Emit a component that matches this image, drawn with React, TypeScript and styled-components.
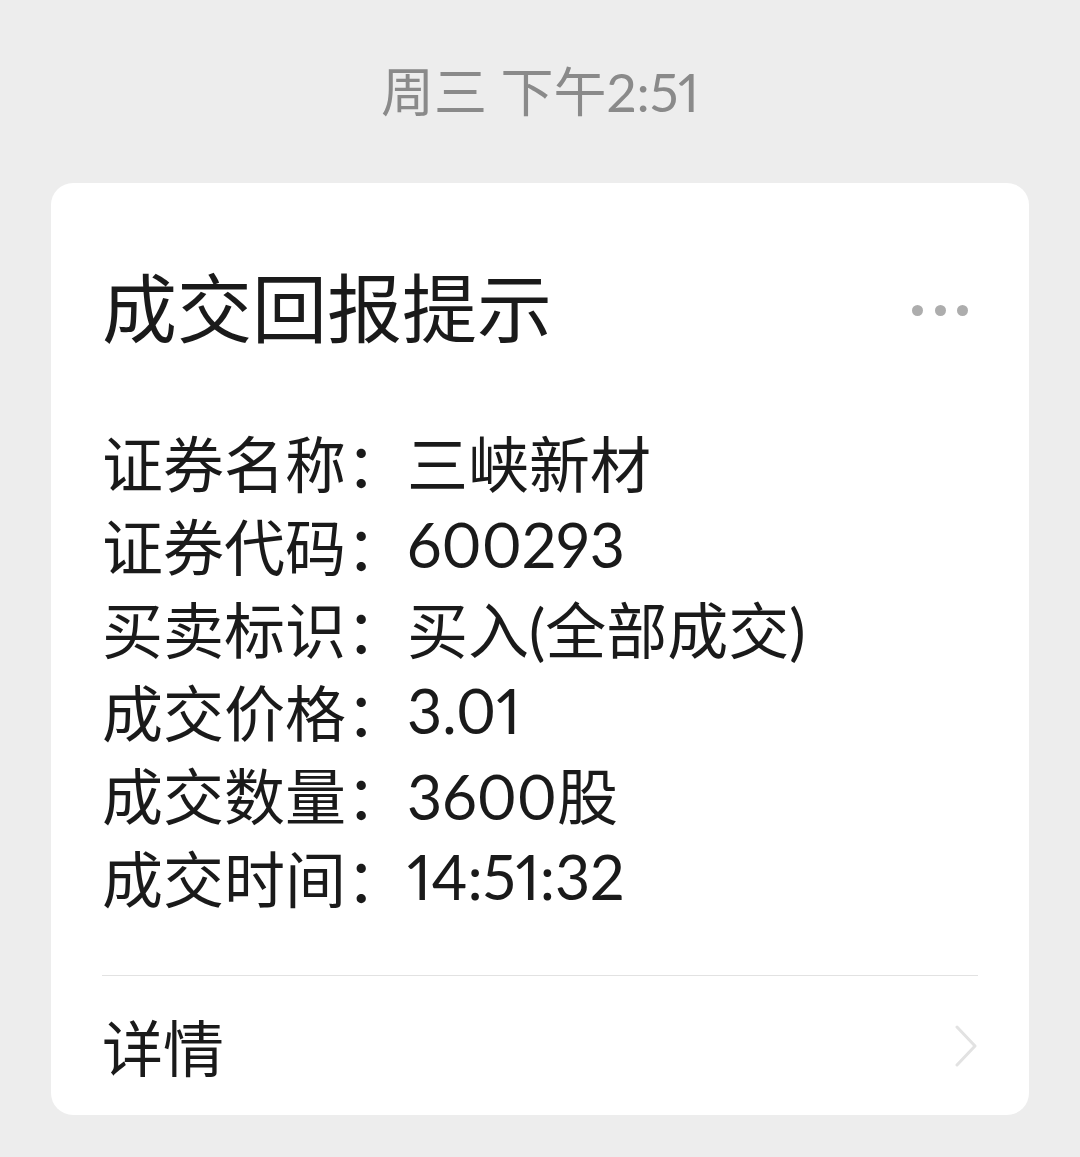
import React from "react";
import styled, { createGlobalStyle } from "styled-components";

const GlobalStyle = createGlobalStyle`
  html, body {
    margin: 0;
    padding: 0;
    background: #ededed;
  }
  body {
    font-family: Lato, "Noto Sans CJK SC", sans-serif;
    -webkit-font-smoothing: antialiased;
  }
`;

const Page = styled.div`
  width: 1080px;
  min-height: 1157px;
  background: #ededed;
  display: flex;
  flex-direction: column;
  align-items: center;
  box-sizing: border-box;
  padding-top: 61px;
`;

const Stamp = styled.div`
  height: 62px;
  line-height: 62px;
  font-size: 53px;
  color: #8a8a8a;
  white-space: pre;
  font-family: Lato, "Noto Sans CJK SC", sans-serif;
  font-variant-numeric: proportional-nums;
`;

const Card = styled.section`
  margin-top: 60px;
  width: 978px;
  background: #ffffff;
  border-radius: 22px;
  box-sizing: border-box;
  padding: 0 51px;
  display: flex;
  flex-direction: column;
`;

const Header = styled.div`
  display: flex;
  align-items: center;
  justify-content: space-between;
  padding: 77px 10px 0 0;
  height: 90px;
`;

const Title = styled.h1`
  margin: 0;
  font-size: 75px;
  line-height: 90px;
  font-weight: 400;
  color: #1a1a1a;
  font-family: "Noto Sans CJK SC", sans-serif;
`;

const Dots = styled.div`
  display: flex;
  gap: 11.5px;
  margin-top: 10px;
`;

const Dot = styled.span`
  width: 11px;
  height: 11px;
  border-radius: 50%;
  background: #adadad;
`;

const Rows = styled.dl`
  margin: 70px 0 0;
  padding: 0;
  display: flex;
  flex-direction: column;
`;

const Row = styled.div`
  display: flex;
  height: 83px;
  align-items: center;
  font-size: 61px;
  color: #1a1a1a;
`;

const Label = styled.dt`
  width: 305px;
  flex: none;
  font-weight: 400;
  font-family: "Noto Sans CJK SC", sans-serif;
`;

const Value = styled.dd`
  margin: 0;
  white-space: nowrap;
  font-weight: 400;
  font-family: Lato, "Noto Sans CJK SC", sans-serif;
  font-variant-numeric: proportional-nums;
`;

const Divider = styled.hr`
  margin: 57px 0 0;
  border: none;
  height: 1px;
  background: #e2e2e2;
`;

const Detail = styled.div`
  height: 139px;
  display: flex;
  align-items: center;
  justify-content: space-between;
  padding: 0;
`;

const DetailText = styled.span`
  font-size: 61px;
  font-weight: 400;
  color: #1a1a1a;
  font-family: "Noto Sans CJK SC", sans-serif;
`;

const Chevron = styled.svg`
  width: 23px;
  height: 42px;
`;

const rows: [string, string][] = [
  ["证券名称：", "三峡新材"],
  ["证券代码：", "600293"],
  ["买卖标识：", "买入(全部成交)"],
  ["成交价格：", "3.01"],
  ["成交数量：", "3600股"],
  ["成交时间：", "14:51:32"],
];

export default function App() {
  return (
    <>
      <GlobalStyle />
      <Page>
        <Stamp>周三 下午2:51</Stamp>
        <Card>
          <Header>
            <Title>成交回报提示</Title>
            <Dots>
              <Dot />
              <Dot />
              <Dot />
            </Dots>
          </Header>
          <Rows>
            {rows.map(([k, v]) => (
              <Row key={k}>
                <Label>{k}</Label>
                <Value>{v}</Value>
              </Row>
            ))}
          </Rows>
          <Divider />
          <Detail>
            <DetailText>详情</DetailText>
            <Chevron viewBox="0 0 23 42" fill="none">
              <path
                d="M2 2 L20 21 L2 40"
                stroke="#e2e2e2"
                strokeWidth="3"
                strokeLinecap="round"
                strokeLinejoin="round"
              />
            </Chevron>
          </Detail>
        </Card>
      </Page>
    </>
  );
}
